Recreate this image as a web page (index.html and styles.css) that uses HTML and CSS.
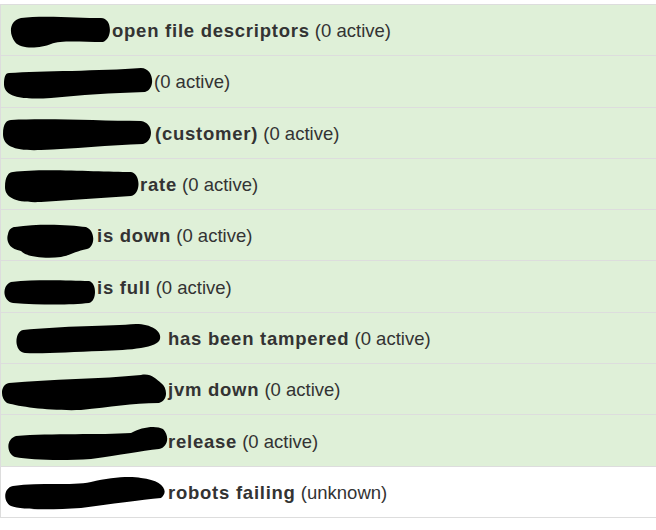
FILE: index.html
```html
<!DOCTYPE html>
<html>
<head>
<meta charset="utf-8">
<link rel="stylesheet" href="styles.css">
</head>
<body>
<ul class="list">
  <li class="item ok">
    <svg class="redact" width="111" height="50" viewBox="0 0 111 50"><path d="M20,13 C40,10 80,13 100,13 C111,13 112,33 102,37 C80,37 60,35 50,39 C40,43 20,45 14,37 C7,28 9,15 20,13 Z"/></svg>
    <span class="text"><strong>open file descriptors</strong> (0 active)</span>
  </li>
  <li class="item ok">
    <svg class="redact" width="153" height="50" viewBox="0 0 153 50"><path d="M8,17 C40,15 100,15 140,12 C153,12 155,33 144,36 C110,37 80,39 50,42 C20,44 3,41 3,28 C3,20 5,17 8,17 Z"/></svg>
    <span class="text">(0 active)</span>
  </li>
  <li class="item ok">
    <svg class="redact" width="154" height="50" viewBox="0 0 154 50"><path d="M10,12 C50,10 100,13 140,13 C153,15 153,33 142,36 C110,37 70,41 40,42 C15,43 2,39 2,26 C2,15 6,12 10,12 Z"/></svg>
    <span class="text"><strong>(customer)</strong> (0 active)</span>
  </li>
  <li class="item ok">
    <svg class="redact" width="139" height="50" viewBox="0 0 139 50"><path d="M12,13 C40,9 100,13 130,13 C140,15 140,35 130,37 C100,39 70,41 40,43 C15,44 4,39 4,28 C4,17 8,13 12,13 Z"/></svg>
    <span class="text"><strong>rate</strong> (0 active)</span>
  </li>
  <li class="item ok">
    <svg class="redact" width="96" height="50" viewBox="0 0 96 50"><path d="M14,17 C40,13 70,15 85,17 C95,21 94,37 86,39 C75,41 70,45 60,47 C45,49 25,47 20,41 C7,39 5,30 7,24 C8,19 11,17 14,17 Z"/></svg>
    <span class="text"><strong>is down</strong> (0 active)</span>
  </li>
  <li class="item ok">
    <svg class="redact" width="96" height="50" viewBox="0 0 96 50"><path d="M10,20 C40,17 70,19 88,19 C96,21 96,39 88,41 C70,43 40,43 12,41 C1,39 1,23 10,20 Z"/></svg>
    <span class="text"><strong>is full</strong> (0 active)</span>
  </li>
  <li class="item ok">
    <svg class="redact" width="167" height="50" viewBox="0 0 167 50"><path d="M22,17 C60,13 110,13 135,11 C150,11 161,18 159,26 C157,35 130,37 100,38 C70,39 40,41 24,40 C13,39 13,19 22,17 Z"/></svg>
    <span class="text"><strong>has been tampered</strong> (0 active)</span>
  </li>
  <li class="item ok">
    <svg class="redact" width="167" height="50" viewBox="0 0 167 50"><path d="M8,19 C50,15 100,15 140,11 C150,9 155,15 160,19 C167,24 167,37 158,39 C130,39 110,43 80,46 C50,47 20,43 6,39 C-1,34 -1,21 8,19 Z"/></svg>
    <span class="text"><strong>jvm down</strong> (0 active)</span>
  </li>
  <li class="item ok">
    <svg class="redact" width="167" height="50" viewBox="0 0 167 50"><path d="M15,20 C50,17 100,19 130,17 C140,11 155,9 162,13 C169,20 167,31 158,33 C140,35 120,39 90,43 C60,45 30,44 14,41 C5,37 5,23 15,20 Z"/></svg>
    <span class="text"><strong>release</strong> (0 active)</span>
  </li>
  <li class="item">
    <svg class="redact" width="167" height="50" viewBox="0 0 167 50"><path d="M12,19 C40,15 70,19 90,15 C110,10 130,9 140,11 C161,13 169,24 160,31 C140,33 110,37 80,41 C50,43 20,43 10,39 C2,35 2,21 12,19 Z"/></svg>
    <span class="text"><strong>robots failing</strong> (unknown)</span>
  </li>
</ul>
</body>
</html>
```

FILE: styles.css
```css
html, body {
  margin: 0;
  padding: 0;
  background: #ffffff;
}

.list {
  list-style: none;
  margin: 4px 0 0 0;
  padding: 0;
  border-bottom: 1px solid #dddddd;
  font-family: "Liberation Sans", Arial, sans-serif;
  font-size: 18.5px;
  color: #333333;
}

.item {
  display: flex;
  align-items: center;
  height: 50.3px;
  border-top: 1px solid #dddddd;
  border-left: 1px solid #dddddd;
  background: #ffffff;
}

.item.ok {
  background: #dff0d8;
}

.redact {
  flex: none;
  display: block;
  fill: #000000;
}

.text {
  white-space: nowrap;
  padding-top: 2px;
}

.text strong {
  font-weight: bold;
  letter-spacing: 0.75px;
}
```
